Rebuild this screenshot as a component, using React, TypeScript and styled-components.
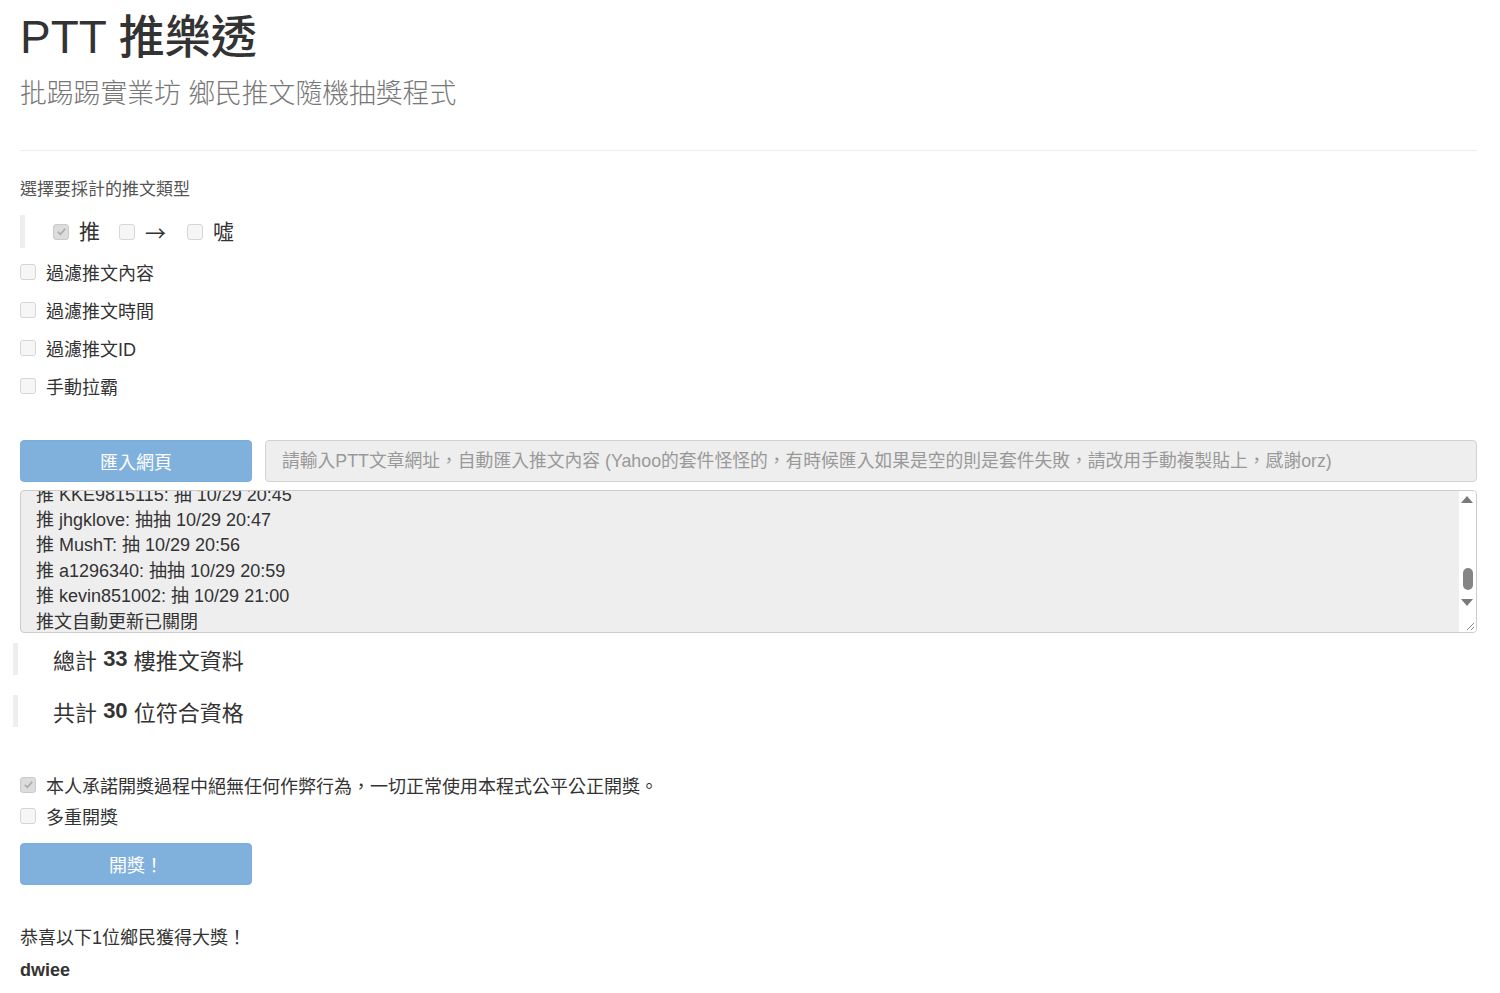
import React, { useEffect, useRef } from "react";
import styled, { createGlobalStyle } from "styled-components";

const GlobalStyle = createGlobalStyle`
  html, body {
    margin: 0;
    padding: 0;
    background: #fff;
  }
  body {
    font-family: "Liberation Sans", "Noto Sans CJK TC", sans-serif;
    color: #333;
  }
`;

const Page = styled.div`
  padding: 0 23px 40px 20px;
`;

const Title = styled.h1`
  margin: 0;
  padding-top: 14px;
  font-size: 46px;
  line-height: 46px;
  font-weight: 500;
  color: #333;
`;

const Subtitle = styled.div`
  margin-top: 17px;
  font-size: 26.8px;
  line-height: 34px;
  font-weight: 300;
  color: #777;
`;

const Rule = styled.hr`
  margin: 39px 0 0;
  border: 0;
  border-top: 1px solid #eee;
`;

const SectionLabel = styled.div`
  margin-top: 27px;
  font-size: 17px;
  line-height: 24px;
  color: #555;
`;

const Quote = styled.div<{ $shift?: number }>`
  display: flex;
  align-items: center;
  border-left: 5px solid #eee;
  margin-left: ${(p) => -(p.$shift ?? 0)}px;
`;

const TypeQuote = styled(Quote)`
  margin-top: 13px;
  height: 33px;
  padding-left: 28px;
  gap: 10px;
  font-size: 21px;
  line-height: 30px;
`;

const TypeItem = styled.span`
  display: inline-flex;
  align-items: center;
  gap: 10px;
  margin-right: 9px;
`;

const Arrow = styled.span`
  font-family: "Noto Sans CJK TC", sans-serif;
  font-size: 21px;
  margin-right: 2px;
`;

const Box = styled.span<{ $checked?: boolean }>`
  display: inline-flex;
  align-items: center;
  justify-content: center;
  width: 14px;
  height: 14px;
  border: 1px solid ${(p) => (p.$checked ? "#c9c9c9" : "#d6d6d6")};
  border-radius: 3px;
  background: ${(p) => (p.$checked ? "#dcdcdc" : "#f6f6f6")};
  flex-shrink: 0;
`;

const OptionList = styled.div<{ $top: number; $row: number }>`
  margin-top: ${(p) => p.$top}px;
  display: flex;
  flex-direction: column;
  & > label {
    height: ${(p) => p.$row}px;
  }
`;

const Option = styled.label`
  display: flex;
  align-items: center;
  gap: 10px;
  font-size: 18px;
  color: #333;
`;

const ImportRow = styled.div`
  display: flex;
  gap: 13px;
  margin-top: 35px;
  height: 42px;
`;

const BlueButton = styled.button`
  width: 232px;
  height: 42px;
  flex-shrink: 0;
  border: 1px solid #7aaedb;
  border-radius: 4px;
  background: #80b1dd;
  color: #fff;
  font-family: inherit;
  font-size: 18px;
  padding: 0;
`;

const UrlInput = styled.input`
  flex: 1;
  height: 42px;
  box-sizing: border-box;
  border: 1px solid #d2d2d2;
  border-radius: 4px;
  background: #eee;
  padding: 0 16px;
  font-family: inherit;
  font-size: 17.8px;
  color: #555;
  &::placeholder {
    color: #999;
  }
`;

const LogWrap = styled.div`
  position: relative;
  margin-top: 8px;
`;

const Log = styled.textarea`
  display: block;
  width: 100%;
  box-sizing: border-box;
  height: 143px;
  padding: 0 32px 0 15px;
  border: 1px solid #ccc;
  border-radius: 4px;
  background: #eee;
  color: #333;
  font-family: inherit;
  font-size: 18px;
  line-height: 25.4px;
  resize: none;
  outline: none;
  overflow: hidden;
`;

/* drawn scrollbar over the right edge of the log box */
const ScrollTrack = styled.div`
  position: absolute;
  top: 1px;
  right: 1px;
  bottom: 1px;
  width: 17px;
  background: #fff;
  border-top-right-radius: 3px;
  border-bottom-right-radius: 3px;
  pointer-events: none;
`;

const ScrollArrow = styled.div<{ $down?: boolean }>`
  position: absolute;
  left: 2px;
  ${(p) => (p.$down ? "top: 108px;" : "top: 5px;")}
  width: 0;
  height: 0;
  border-left: 6.5px solid transparent;
  border-right: 6.5px solid transparent;
  ${(p) => (p.$down ? "border-top: 7px solid #7a7a7a;" : "border-bottom: 7px solid #7a7a7a;")}
`;

const ScrollThumb = styled.div`
  position: absolute;
  left: 4px;
  top: 77px;
  width: 10px;
  height: 22px;
  border-radius: 5px;
  background: #858585;
`;

const ResizeGrip = styled.svg`
  position: absolute;
  right: 2px;
  bottom: 2px;
`;

const StatQuote = styled(Quote)`
  height: 32px;
  padding-left: 35px;
  font-size: 22px;
  color: #333;
  & + & {
    margin-top: 20px;
  }
`;

const Stats = styled.div`
  margin-top: 10px;
`;

const Big = styled.b`
  font-weight: 700;
`;

const DrawButton = styled(BlueButton)`
  margin-top: 12px;
`;

const Congrats = styled.div`
  margin-top: 41px;
  font-size: 18px;
  line-height: 24px;
  color: #333;
`;

const Winner = styled.div`
  margin-top: 8px;
  font-size: 18px;
  line-height: 24px;
  font-weight: 700;
  color: #333;
`;

const Check = ({ checked }: { checked?: boolean }) => (
  <Box $checked={checked}>
    {checked && (
      <svg width="11" height="11" viewBox="0 0 12 12">
        <path d="M2 6.3 L4.8 9 L10 3" fill="none" stroke="#a9a9a9" strokeWidth="1.8" />
      </svg>
    )}
  </Box>
);

const pushes = [
  "推 chenyc: 抽 10/29 18:02",
  "推 leo1217: 抽抽 10/29 18:05",
  "推 hiroshi07: 抽 10/29 18:11",
  "推 yuchi0520: 抽 10/29 18:20",
  "推 pinkpig: 抽抽 10/29 18:33",
  "推 abc12345: 抽 10/29 18:41",
  "推 tommy0902: 抽 10/29 18:56",
  "推 sunnyday: 抽 10/29 19:03",
  "推 dwiee: 抽 10/29 19:10",
  "推 KKE9815115: 抽 10/29 20:45",
  "推 jhgklove: 抽抽 10/29 20:47",
  "推 MushT: 抽 10/29 20:56",
  "推 a1296340: 抽抽 10/29 20:59",
  "推 kevin851002: 抽 10/29 21:00",
  "推文自動更新已關閉",
];

const App = () => {
  const logRef = useRef<HTMLTextAreaElement>(null);

  useEffect(() => {
    const el = logRef.current;
    if (el) el.scrollTop = el.scrollHeight - el.clientHeight - 3;
  }, []);

  return (
    <Page>
      <GlobalStyle />
      <Title>PTT 推樂透</Title>
      <Subtitle>批踢踢實業坊 鄉民推文隨機抽獎程式</Subtitle>
      <Rule />

      <SectionLabel>選擇要採計的推文類型</SectionLabel>
      <TypeQuote>
        <TypeItem>
          <Check checked />推
        </TypeItem>
        <TypeItem>
          <Check />
          <Arrow>→</Arrow>
        </TypeItem>
        <TypeItem>
          <Check />噓
        </TypeItem>
      </TypeQuote>

      <OptionList $top={5} $row={38}>
        <Option>
          <Check />過濾推文內容
        </Option>
        <Option>
          <Check />過濾推文時間
        </Option>
        <Option>
          <Check />過濾推文ID
        </Option>
        <Option>
          <Check />手動拉霸
        </Option>
      </OptionList>

      <ImportRow>
        <BlueButton>匯入網頁</BlueButton>
        <UrlInput
          disabled
          placeholder="請輸入PTT文章網址，自動匯入推文內容 (Yahoo的套件怪怪的，有時候匯入如果是空的則是套件失敗，請改用手動複製貼上，感謝orz)"
        />
      </ImportRow>
      <LogWrap>
        <Log ref={logRef} readOnly defaultValue={pushes.join("\n")} />
        <ScrollTrack>
          <ScrollArrow />
          <ScrollThumb />
          <ScrollArrow $down />
        </ScrollTrack>
        <ResizeGrip width="11" height="11" viewBox="0 0 11 11">
          <path d="M10 3 L3 10 M10 7 L7 10" stroke="#888" strokeWidth="1" />
        </ResizeGrip>
      </LogWrap>

      <Stats>
        <StatQuote $shift={7}>
          總計&nbsp;<Big>33</Big>&nbsp;樓推文資料
        </StatQuote>
        <StatQuote $shift={7}>
          共計&nbsp;<Big>30</Big>&nbsp;位符合資格
        </StatQuote>
      </Stats>

      <OptionList $top={42} $row={31}>
        <Option>
          <Check checked />本人承諾開獎過程中絕無任何作弊行為，一切正常使用本程式公平公正開獎。
        </Option>
        <Option>
          <Check />多重開獎
        </Option>
      </OptionList>
      <DrawButton>開獎！</DrawButton>

      <Congrats>恭喜以下1位鄉民獲得大獎！</Congrats>
      <Winner>dwiee</Winner>
    </Page>
  );
};

export default App;
